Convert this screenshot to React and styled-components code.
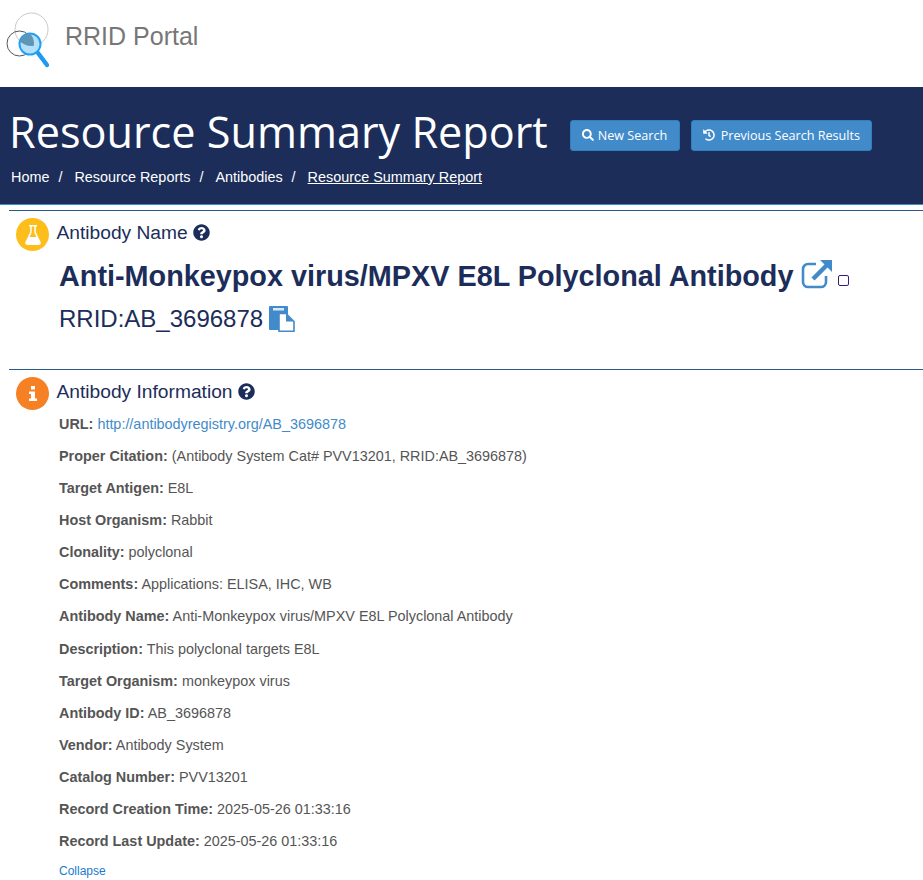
import styled, { createGlobalStyle } from "styled-components";
import { FaSearch, FaHistory, FaQuestionCircle } from "react-icons/fa";

const GlobalStyle = createGlobalStyle`
  html, body {
    margin: 0;
    padding: 0;
    background: #fff;
    font-family: "Liberation Sans", Arial, sans-serif;
  }
`;

const Page = styled.div`
  width: 923px;
  height: 880px;
  overflow: hidden;
`;
const TopBar = styled.div`
  height: 87px;
  display: flex;
  align-items: flex-start;
  padding-left: 6px;
  box-sizing: border-box;
`;
const Logo = styled.svg`
  width: 46px;
  height: 70px;
  flex: none;
`;
const Brand = styled.div`
  font-size: 25px;
  line-height: 30px;
  color: #777;
  margin: 21px 0 0 13px;
`;
const Banner = styled.div`
  height: 118px;
  box-sizing: border-box;
  background: #1c2d5a;
  border-bottom: 1px solid #428bca;
  padding: 16px 0 0 9px;
`;
const TitleRow = styled.div`
  display: flex;
  align-items: center;
`;
const BannerTitle = styled.h1`
  margin: 0;
  font-family: "Open Sans", sans-serif;
  font-weight: 400;
  font-size: 43.2px;
  line-height: 58px;
  color: #fff;
`;
const Button = styled.a`
  display: flex;
  align-items: center;
  gap: ${(p) => p.$gap}px;
  width: ${(p) => p.$width}px;
  height: 31px;
  box-sizing: border-box;
  padding-left: 11px;
  margin: 6px 0 0 ${(p) => p.$left}px;
  background: #428bca;
  border: 1px solid #357ebd;
  border-radius: 3px;
  color: #fff;
  font-family: "Open Sans", sans-serif;
  font-size: 12.6px;
  svg {
    width: 12px;
    height: 12px;
  }
`;
const Crumbs = styled.div`
  display: flex;
  margin: 6px 0 0 2px;
  font-size: 14.4px;
  line-height: 20px;
  color: #fff;
`;
const Crumb = styled.span`
  text-decoration: ${(p) => (p.$current ? "underline" : "none")};
`;
const Slash = styled.span`
  margin: 0 12px 0 9px;
`;
const Section = styled.section`
  margin: ${(p) => p.$top}px 0 0 9px;
  border-top: 1px solid #2a5b8f;
  padding: 7px 0 0 7px;
`;
const SectionHead = styled.div`
  display: flex;
  align-items: center;
  height: 33px;
`;
const Badge = styled.div`
  width: 33px;
  height: 33px;
  border-radius: 50%;
  background: ${(p) => p.$color};
  display: flex;
  align-items: center;
  justify-content: center;
`;
const BadgeIcon = styled.svg`
  width: ${(p) => p.$w}px;
  height: ${(p) => p.$h}px;
  fill: #fff;
`;
const SectionTitle = styled.h3`
  margin: 0 5px 4px 7.5px;
  font-weight: 400;
  font-size: 19.2px;
  line-height: 28px;
  color: #1c2d5a;
`;
const HelpIcon = styled(FaQuestionCircle)`
  color: #1c2d5a;
  font-size: 17px;
  margin-bottom: 4px;
`;
const Body = styled.div`
  padding-left: 43px;
`;
const Name = styled.div`
  display: flex;
  align-items: center;
  margin-top: 7px;
  height: 36px;
  font-size: 28.8px;
  font-weight: 700;
  color: #1c2d5a;
`;
const ExternalIcon = styled.svg`
  width: 32px;
  height: 32px;
  margin-left: 8px;
  margin-bottom: 4px;
`;
const Check = styled.span`
  width: 9px;
  height: 9px;
  border: 1px solid #3b1a78;
  border-radius: 2px;
  margin: 8px 0 0 5px;
`;
const Rrid = styled.div`
  display: flex;
  align-items: center;
  margin-top: 7px;
  height: 36px;
  font-size: 24px;
  color: #1c2d5a;
`;
const CopyIcon = styled.svg`
  width: 26px;
  height: 26px;
  margin-left: 6px;
`;
const Fields = styled.div`
  margin-top: 4px;
`;
const Field = styled.div`
  font-size: 14.4px;
  line-height: 20px;
  height: 20px;
  margin-bottom: 12.08px;
  color: #555;
`;
const Label = styled.b`
  font-weight: 700;
`;
const Link = styled.a`
  color: #428bca;
`;
const Collapse = styled.a`
  display: block;
  font-size: 12px;
  line-height: 16px;
  color: #1a7bd0;
`;

const fields = [
  ["Proper Citation", "(Antibody System Cat# PVV13201, RRID:AB_3696878)"],
  ["Target Antigen", "E8L"],
  ["Host Organism", "Rabbit"],
  ["Clonality", "polyclonal"],
  ["Comments", "Applications: ELISA, IHC, WB"],
  ["Antibody Name", "Anti-Monkeypox virus/MPXV E8L Polyclonal Antibody"],
  ["Description", "This polyclonal targets E8L"],
  ["Target Organism", "monkeypox virus"],
  ["Antibody ID", "AB_3696878"],
  ["Vendor", "Antibody System"],
  ["Catalog Number", "PVV13201"],
  ["Record Creation Time", "2025-05-26 01:33:16"],
  ["Record Last Update", "2025-05-26 01:33:16"],
];

const App = () => {
  return (
    <Page>
      <GlobalStyle />
      <TopBar>
        <Logo viewBox="0 0 46 70">
          <defs>
            <clipPath id="lens">
              <circle cx="24" cy="44" r="10.5" />
            </clipPath>
            <clipPath id="small" clipPath="url(#lens)">
              <circle cx="14" cy="43.5" r="14" />
            </clipPath>
          </defs>
          <circle cx="25.5" cy="29.5" r="16.5" fill="none" stroke="#c9c9c9" strokeWidth="1" />
          <circle cx="13.5" cy="43.5" r="12.5" fill="none" stroke="#555" strokeWidth="1" />
          <path d="M32 53 L41 65" stroke="#1e9af0" strokeWidth="4.4" strokeLinecap="round" />
          <circle cx="24" cy="44" r="10.5" fill="#b5e0fb" stroke="#22a0f5" strokeWidth="2" />
          <circle cx="25.5" cy="29.5" r="16.5" fill="#5f96b8" clipPath="url(#small)" />
        </Logo>
        <Brand>RRID Portal</Brand>
      </TopBar>
      <Banner>
        <TitleRow>
          <BannerTitle>Resource Summary Report</BannerTitle>
          <Button $left={22} $width={110} $gap={4}>
            <FaSearch />
            New Search
          </Button>
          <Button $left={11} $width={181} $gap={6}>
            <FaHistory />
            Previous Search Results
          </Button>
        </TitleRow>
        <Crumbs>
          <Crumb>Home</Crumb>
          <Slash>/</Slash>
          <Crumb>Resource Reports</Crumb>
          <Slash>/</Slash>
          <Crumb>Antibodies</Crumb>
          <Slash>/</Slash>
          <Crumb $current>Resource Summary Report</Crumb>
        </Crumbs>
      </Banner>
      <Section $top={5}>
        <SectionHead>
          <Badge $color="#fdbd1a">
            <BadgeIcon viewBox="0 0 16 20" $w={16} $h={20}>
              <path d="M4 0 H12 V1.6 H10.8 V7 L15.6 17 Q16.4 20 13.6 20 H2.4 Q-0.4 20 0.4 17 L5.2 7 V1.6 H4 Z M6.7 1.6 V7.5 L4.6 12 H11.4 L9.3 7.5 V1.6 Z" fillRule="evenodd" />
            </BadgeIcon>
          </Badge>
          <SectionTitle>Antibody Name</SectionTitle>
          <HelpIcon />
        </SectionHead>
        <Body>
          <Name>
            Anti-Monkeypox virus/MPXV E8L Polyclonal Antibody
            <ExternalIcon viewBox="0 0 32 32">
              <path d="M15 6 H7 A5 5 0 0 0 2 11 V24 A5 5 0 0 0 7 29 H20 A5 5 0 0 0 25 24 V18" fill="none" stroke="#428bca" strokeWidth="2.6" />
              <path d="M12 21 L26 7" stroke="#428bca" strokeWidth="4.4" />
              <path d="M19 2 H31 V14 Z" fill="#428bca" />
            </ExternalIcon>
            <Check />
          </Name>
          <Rrid>
            RRID:AB_3696878
            <CopyIcon viewBox="0 0 26 26">
              <path d="M1 0 H18 A1 1 0 0 1 19 1 V24 H1 A1 1 0 0 1 0 23 V1 A1 1 0 0 1 1 0 Z" fill="#428bca" />
              <path d="M4 2 H15 V4.5 H4 Z" fill="#d8e8f5" />
              <path d="M10 7.5 H17 L25 15.5 V25.2 H10 Z" fill="#fff" stroke="#428bca" strokeWidth="1.6" />
              <path d="M17 8 V15.5 H24.5 Z" fill="#428bca" />
            </CopyIcon>
          </Rrid>
        </Body>
      </Section>
      <Section $top={32}>
        <SectionHead>
          <Badge $color="#f68024">
            <BadgeIcon viewBox="0 0 8 15" $w={8} $h={15}>
              <path d="M2 0 H6 V3.6 H2 Z M0 5.4 H6 V12.4 H8 V15 H0 V12.4 H2 V8 H0 Z" />
            </BadgeIcon>
          </Badge>
          <SectionTitle>Antibody Information</SectionTitle>
          <HelpIcon />
        </SectionHead>
        <Body>
          <Fields>
            <Field>
              <Label>URL:</Label>{" "}
              <Link>http://antibodyregistry.org/AB_3696878</Link>
            </Field>
            {fields.map(([label, value]) => (
              <Field key={label}>
                <Label>{label}:</Label> {value}
              </Field>
            ))}
          </Fields>
          <Collapse>Collapse</Collapse>
        </Body>
      </Section>
    </Page>
  );
};

export default App;
